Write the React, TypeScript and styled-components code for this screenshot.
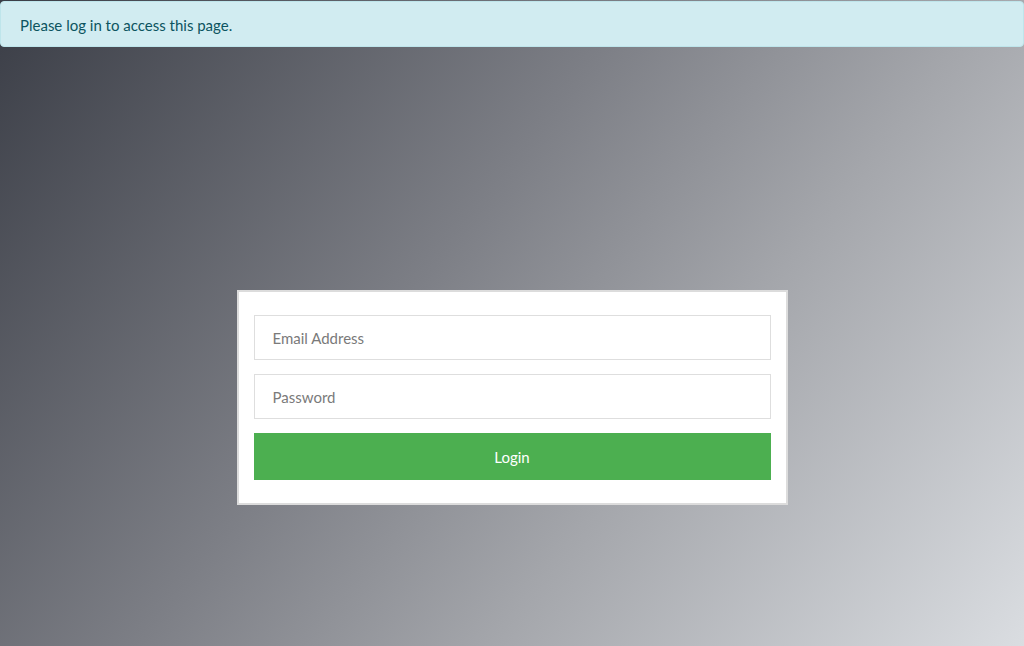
import React from "react";
import styled, { createGlobalStyle } from "styled-components";

const GlobalStyle = createGlobalStyle`
  html, body {
    margin: 0;
    padding: 0;
    height: 100%;
  }
  body {
    font-family: Lato, "Open Sans", sans-serif;
  }
  #root {
    min-height: 100%;
  }
  * {
    box-sizing: border-box;
  }
`;

const Page = styled.div`
  height: 646px;
  display: flex;
  flex-direction: column;
  background: linear-gradient(128deg, #3a3d46 0%, #7d7f86 42%, #a4a6ab 65%, #dadde1 100%);
`;

const Alert = styled.div`
  flex: none;
  height: 46px;
  margin-top: 1px;
  display: flex;
  align-items: center;
  padding: 2px 19px 0;
  background: #d1ecf1;
  border: 1px solid #bee5eb;
  border-radius: 4px;
  color: #0c5460;
  font-size: 15px;
`;

const Stage = styled.main`
  flex: 1;
  display: flex;
  justify-content: center;
  align-items: flex-start;
  padding-top: 243px;
`;

const Card = styled.form`
  width: 551px;
  padding: 23px 15px;
  background: #fff;
  border: 2px solid #dcdcdc;
  display: flex;
  flex-direction: column;
  gap: 14px;
`;

const Field = styled.input`
  height: 45px;
  width: 100%;
  padding: 0 18px;
  border: 1px solid #dedede;
  background: #fff;
  font-family: inherit;
  font-size: 15px;
  color: #555;
  outline: none;

  &::placeholder {
    color: #7a7a7a;
  }
`;

const Submit = styled.button`
  height: 47px;
  width: 100%;
  border: none;
  background: #4caf50;
  color: #fff;
  font-family: inherit;
  font-size: 15px;
  cursor: pointer;
`;

export default function App() {
  return (
    <>
      <GlobalStyle />
      <Page>
        <Alert>Please log in to access this page.</Alert>
        <Stage>
          <Card onSubmit={(e) => e.preventDefault()}>
            <Field type="email" placeholder="Email Address" />
            <Field type="password" placeholder="Password" />
            <Submit type="submit">Login</Submit>
          </Card>
        </Stage>
      </Page>
    </>
  );
}
